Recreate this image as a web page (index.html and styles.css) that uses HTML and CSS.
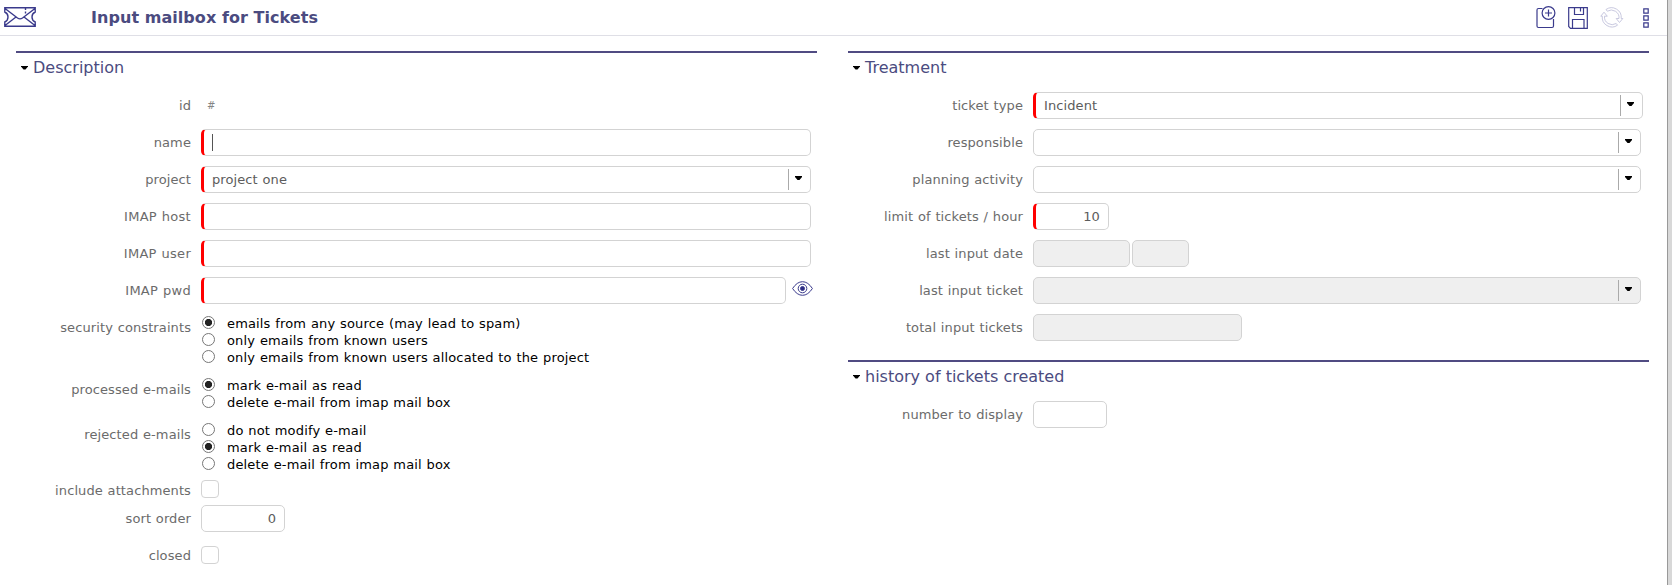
FILE: index.html
```html
<!DOCTYPE html>
<html lang="en">
<head>
<meta charset="utf-8">
<title>Input mailbox for Tickets</title>
<link rel="stylesheet" href="styles.css">
</head>
<body>
<div class="page">
  <header class="toolbar">
    <svg class="logo" width="32" height="20" viewBox="0 0 32 20"><path d="M.8.8H31.2V5Q28 6.500 28 10T31.200 15V19.200H.8V15Q4 13.500 4 10T.8 5ZM1 1.500L13.500 11Q16 12.800 18.500 11L31 1.500M1 18.500L12 10M31 18.500L20 10"/><path d="M21.500 1V7" stroke-dasharray="2 1.500"/></svg>
    <h1 class="title">Input mailbox for Tickets</h1>
    <div class="actions">
      <svg class="icon new" width="20" height="23" viewBox="0 0 20 23"><path d="M6.500 2.500H2.500Q1 2.500 1 4V20Q1 21.500 2.500 21.500H16Q17.500 21.500 17.500 20V13"/><circle cx="12.500" cy="7" r="6.400"/><path d="M12.500 3.500V10.500M9 7H16"/></svg>
      <svg class="icon save" width="20" height="22" viewBox="0 0 20 22"><path d="M.7.7H19.300V21.300H2.500L.7 19.500ZM6.500 1V7.500H15.500V1M12.500 1V4.500M4.500 21V12.500H16V21"/></svg>
      <svg class="icon refresh" width="24" height="22" viewBox="0 0 24 22"><path d="M6 3.500A9.700 9.700 0 0 1 21.200 12.500H22.800L19.500 16.500L16.200 12.500H19A7.700 7.700 0 0 0 7.300 5.200ZM17.500 19.200A9.700 9.700 0 0 1 2.300 10.200H.8L4 6.200L7.300 10.200H4.500A7.700 7.700 0 0 0 16.200 17.500Z"/></svg>
      <svg class="icon more" width="6" height="20" viewBox="0 0 6 20"><path d="M.8.8H5.200V5.200H.8ZM.8 7.800H5.200V12.200H.8ZM.8 14.800H5.200V19.200H.8Z"/></svg>
    </div>
  </header>
  <main class="columns">
    <section class="column">
      <div class="panel">
        <h2 class="heading"><i class="arrow"></i>Description</h2>
        <div class="row"><span class="label">id</span><span class="hash">#</span></div>
        <div class="row"><span class="label">name</span><div class="field required full"><i class="caret"></i></div></div>
        <div class="row"><span class="label">project</span><div class="field required full select">project one<span class="drop"><i class="arrow"></i></span></div></div>
        <div class="row imap"><span class="label">IMAP host</span><div class="field required full"></div></div>
        <div class="row imap"><span class="label">IMAP user</span><div class="field required full"></div></div>
        <div class="row imap"><span class="label">IMAP pwd</span><div class="field required password"></div>
          <svg class="eye" width="21" height="15" viewBox="0 0 21 15"><path d="M.6 7.500Q5 .7 10.500.7T20.400 7.500Q16 14.300 10.500 14.300T.6 7.500Z"/><circle cx="10.500" cy="7.500" r="4.300"/><circle class="pupil" cx="10.500" cy="7.500" r="2"/></svg></div>
        <div class="row security"><span class="label">security constraints</span><div class="radios">
          <div class="option"><i class="radio on"></i>emails from any source (may lead to spam)</div>
          <div class="option"><i class="radio"></i>only emails from known users</div>
          <div class="option"><i class="radio"></i>only emails from known users allocated to the project</div></div></div>
        <div class="row processed"><span class="label">processed e-mails</span><div class="radios">
          <div class="option"><i class="radio on"></i>mark e-mail as read</div>
          <div class="option"><i class="radio"></i>delete e-mail from imap mail box</div></div></div>
        <div class="row rejected"><span class="label">rejected e-mails</span><div class="radios">
          <div class="option"><i class="radio"></i>do not modify e-mail</div>
          <div class="option"><i class="radio on"></i>mark e-mail as read</div>
          <div class="option"><i class="radio"></i>delete e-mail from imap mail box</div></div></div>
        <div class="row attachments"><span class="label">include attachments</span><i class="check"></i></div>
        <div class="row"><span class="label">sort order</span><div class="field number sort">0</div></div>
        <div class="row closed"><span class="label">closed</span><i class="check"></i></div>
      </div>
    </section>
    <section class="column">
      <div class="panel treatment">
        <h2 class="heading"><i class="arrow"></i>Treatment</h2>
        <div class="row"><span class="label">ticket type</span><div class="field required type select">Incident<span class="drop"><i class="arrow"></i></span></div></div>
        <div class="row"><span class="label">responsible</span><div class="field wide select"><span class="drop"><i class="arrow"></i></span></div></div>
        <div class="row"><span class="label">planning activity</span><div class="field wide select"><span class="drop"><i class="arrow"></i></span></div></div>
        <div class="row"><span class="label">limit of tickets / hour</span><div class="field required number limit">10</div></div>
        <div class="row"><span class="label">last input date</span><div class="field readonly date"></div><div class="field readonly time"></div></div>
        <div class="row"><span class="label">last input ticket</span><div class="field readonly wide select"><span class="drop"><i class="arrow"></i></span></div></div>
        <div class="row"><span class="label">total input tickets</span><div class="field readonly total"></div></div>
      </div>
      <div class="panel">
        <h2 class="heading"><i class="arrow"></i>history of tickets created</h2>
        <div class="row"><span class="label">number to display</span><div class="field count"></div></div>
      </div>
    </section>
  </main>
</div>
</body>
</html>
```
FILE: styles.css
```css
* { box-sizing: border-box; }
body { margin: 0; background: #d8d8d8; font: 13px/27px Verdana, "DejaVu Sans", sans-serif; color: #656565; overflow: hidden; }
.page { width: 1668px; height: 585px; background: #fff; border-right: 1px solid #999; }
.toolbar { display: flex; height: 36px; border-bottom: 1px solid #dfdfe6; padding-left: 4px; }
svg { fill: none; stroke: #3a3a8c; stroke-width: 1.2; flex: none; display: block; }
.logo { margin-top: 7px; stroke-width: 1.4; }
.title { margin: 0 0 0 55px; font-size: 16px; line-height: 36px; font-weight: bold; letter-spacing: .05px; color: #4b4b80; white-space: nowrap; }
.actions { display: flex; margin-left: auto; padding-right: 18px; }
.new { margin-top: 6px; }
.save { margin: 7px 0 0 12px; }
.refresh { margin: 6px 0 0 12px; opacity: .3; stroke-width: .9; }
.more { margin: 8px 0 0 19px; }
.columns { display: flex; gap: 31px; padding: 15px 0 0 16px; }
.column { width: 801px; }
.panel { border-top: 2px solid #504b82; }
.treatment { height: 309px; }
.heading { display: flex; align-items: center; height: 29px; margin: 0 0 10px; padding-left: 5px; gap: 5px; font-size: 16px; font-weight: normal; color: #4b4b80; }
.arrow { flex: none; width: 7px; height: 4px; background: #000; clip-path: polygon(0 0, 100% 0, 100% 25%, 64% 100%, 36% 100%, 0 25%); }
.row { display: flex; height: 37px; letter-spacing: .1px; word-spacing: .5px; color: #5c5c5c; }
.label { width: 175px; margin-right: 10px; text-align: right; color: #6b6b6b; white-space: nowrap; }
.imap .label { letter-spacing: .27px; }
.hash { margin-left: 6px; font-size: 10px; color: #858585; }
.field { display: flex; align-items: center; height: 27px; border: 1px solid #d3d3d3; border-radius: 5px; padding-left: 10px; }
.required { border-left: 3px solid #f00; padding-left: 8px; }
.full { width: 610px; }
.password { width: 585px; }
.type { width: 610px; }
.wide { width: 608px; }
.drop { display: flex; align-items: center; width: 22px; height: 21px; margin-left: auto; border-left: 1px solid #aaa; padding: 0 0 3px 6px; }
.caret { width: 1px; height: 17px; background: #555; }
.eye { margin: 4px 0 0 6px; stroke-width: 1; }
.eye .pupil { fill: #2b2b85; }
.number { justify-content: flex-end; padding-right: 8px; }
.sort { width: 84px; }
.limit { width: 76px; }
.readonly { background: #efefef; }
.date { width: 97px; }
.time { width: 57px; margin-left: 2px; }
.total { width: 209px; }
.count { width: 74px; }
.security { height: 62px; }
.processed { height: 45px; }
.rejected { height: 57px; }
.attachments { height: 27px; }
.attachments .label { margin-top: -1px; }
.radios { display: flex; flex-direction: column; padding: 1px 0 0 1px; letter-spacing: .15px; color: #000; }
.option { display: flex; height: 17.200px; line-height: 17.200px; white-space: nowrap; }
.radio { flex: none; width: 13px; height: 13px; margin: 1px 12px 0 0; border: 1px solid #777; border-radius: 50%; }
.radio.on { background: radial-gradient(circle, #222 0 3.200px, #fff 4px); }
.check { width: 18px; height: 18px; margin-top: 2px; border: 1px solid #d3d3d3; border-radius: 4px; }
.closed .check { margin-top: 4px; }
```
